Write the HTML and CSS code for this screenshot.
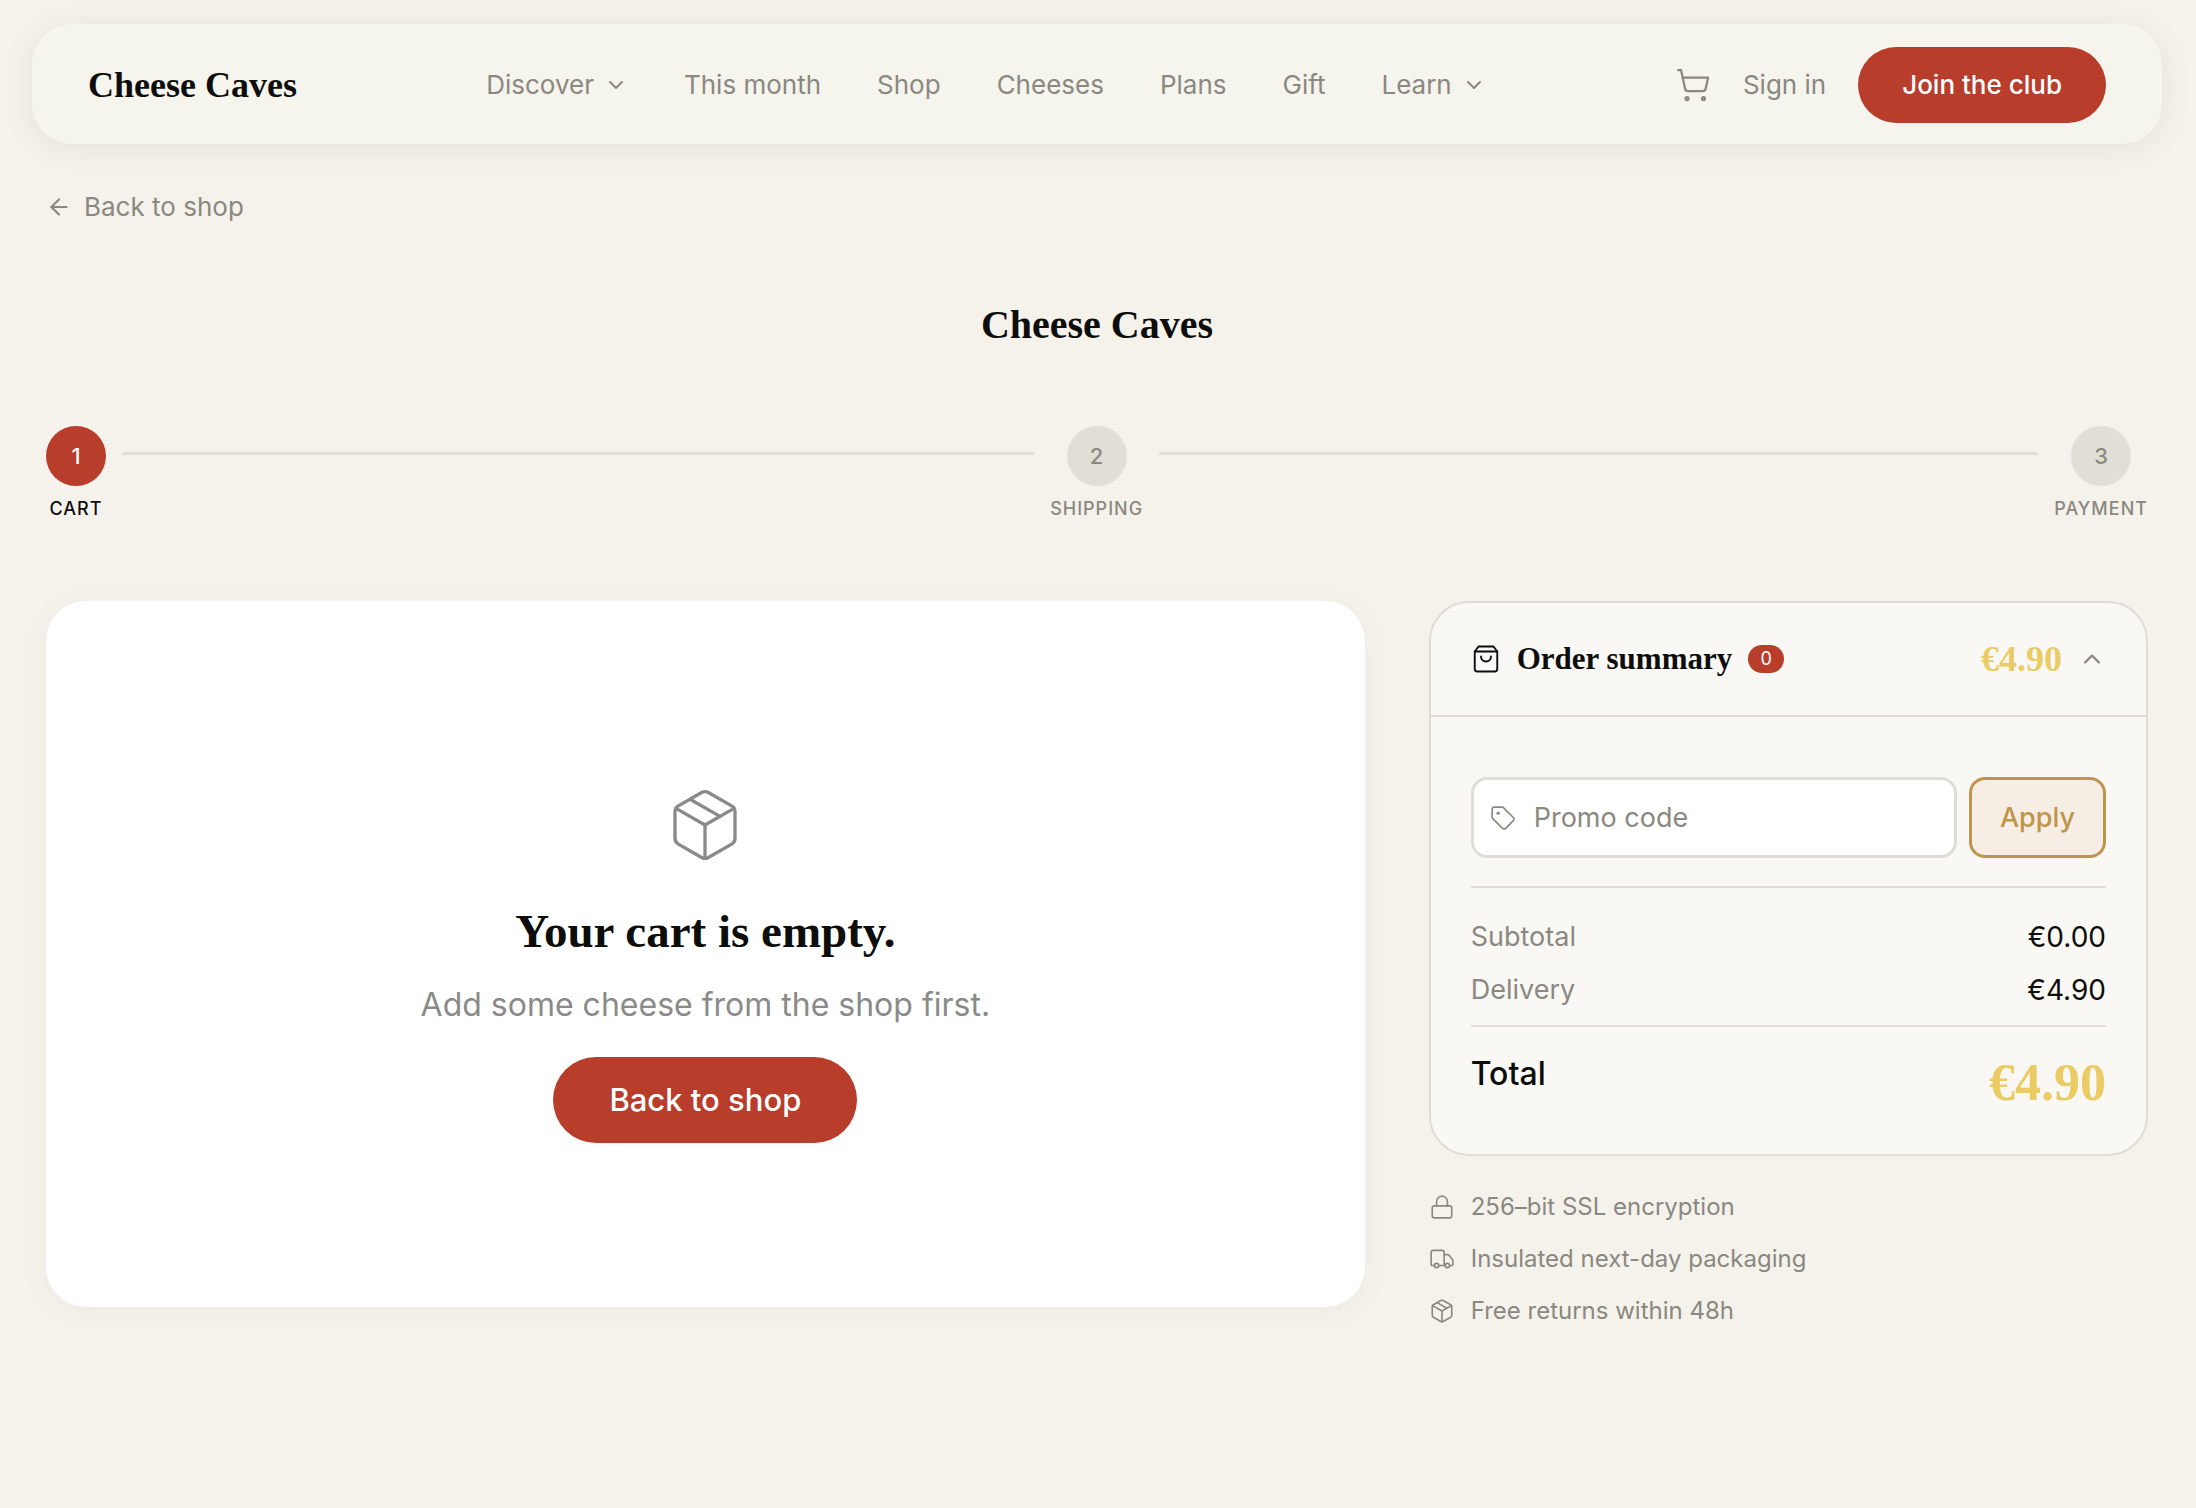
FILE: index.html
```html
<!DOCTYPE html>
<html lang="en">
  <head>
    <meta charset="UTF-8" />
    <meta name="viewport" content="width=device-width, initial-scale=1.0" />
    <title>Checkout - Cheese Caves</title>
    <link rel="stylesheet" href="styles.css">
  </head>
  <body>
    <header class="site-header">
      <a class="logo" href="#">Cheese Caves</a>
      <nav class="main-nav">
        <button class="nav-item" type="button">
          Discover
          <svg class="icon icon-chevron" viewBox="0 0 24 24"><path d="m6 9 6 6 6-6" /></svg>
        </button>
        <a class="nav-item" href="#">This month</a>
        <a class="nav-item" href="#">Shop</a>
        <a class="nav-item" href="#">Cheeses</a>
        <a class="nav-item" href="#">Plans</a>
        <a class="nav-item" href="#">Gift</a>
        <button class="nav-item" type="button">
          Learn
          <svg class="icon icon-chevron" viewBox="0 0 24 24"><path d="m6 9 6 6 6-6" /></svg>
        </button>
      </nav>
      <div class="header-actions">
        <a class="cart-link" href="#" aria-label="Cart">
          <svg class="icon icon-cart" viewBox="0 0 24 24">
            <circle cx="8" cy="21" r="1" />
            <circle cx="19" cy="21" r="1" />
            <path d="M2.05 2.05h2l2.66 12.42a2 2 0 0 0 2 1.58h9.78a2 2 0 0 0 1.95-1.57l1.65-7.43H5.12" />
          </svg>
        </a>
        <a class="nav-item" href="#">Sign in</a>
        <a class="btn btn-small" href="#">Join the club</a>
      </div>
    </header>

    <main class="checkout">
      <a class="back-link" href="#">
        <svg class="icon icon-back" viewBox="0 0 24 24"><path d="m12 19-7-7 7-7" /><path d="M19 12H5" /></svg>
        Back to shop
      </a>

      <h1 class="brand">Cheese Caves</h1>

      <ol class="steps">
        <li class="step-item">
          <div class="step step-active">
            <span class="step-number">1</span>
            <span class="step-label">Cart</span>
          </div>
          <div class="step-line"></div>
        </li>
        <li class="step-item">
          <div class="step">
            <span class="step-number">2</span>
            <span class="step-label">Shipping</span>
          </div>
          <div class="step-line"></div>
        </li>
        <li class="step-item">
          <div class="step">
            <span class="step-number">3</span>
            <span class="step-label">Payment</span>
          </div>
        </li>
      </ol>

      <div class="columns">
        <section class="cart-card">
          <svg class="icon icon-empty" viewBox="0 0 24 24">
            <path d="M11 21.73a2 2 0 0 0 2 0l7-4A2 2 0 0 0 21 16V8a2 2 0 0 0-1-1.73l-7-4a2 2 0 0 0-2 0l-7 4A2 2 0 0 0 3 8v8a2 2 0 0 0 1 1.73z" />
            <path d="M12 22V12" />
            <path d="M3.29 7 12 12l8.71-5" />
            <path d="m7.5 4.27 9 5.15" />
          </svg>
          <h2 class="empty-title">Your cart is empty.</h2>
          <p class="empty-text">Add some cheese from the shop first.</p>
          <a class="btn btn-large" href="#">Back to shop</a>
        </section>

        <aside class="sidebar">
          <section class="summary">
            <button class="summary-toggle" type="button" aria-expanded="true">
              <svg class="icon icon-bag" viewBox="0 0 24 24">
                <path d="M6 2 3 6v14a2 2 0 0 0 2 2h14a2 2 0 0 0 2-2V6l-3-4Z" />
                <path d="M3 6h18" />
                <path d="M16 10a4 4 0 0 1-8 0" />
              </svg>
              <span class="summary-title">Order summary</span>
              <span class="count">0</span>
              <span class="summary-price">€4.90</span>
              <svg class="icon icon-up" viewBox="0 0 24 24"><path d="m18 15-6-6-6 6" /></svg>
            </button>
            <div class="summary-body">
              <form class="promo">
                <label class="promo-field">
                  <svg class="icon icon-tag" viewBox="0 0 24 24">
                    <path d="M12.59 2.59A2 2 0 0 0 11.17 2H4a2 2 0 0 0-2 2v7.17a2 2 0 0 0 .59 1.42l8.7 8.7a2.43 2.43 0 0 0 3.42 0l6.58-6.58a2.43 2.43 0 0 0 0-3.42z" />
                    <circle class="tag-hole" cx="7.5" cy="7.5" r="1.5" />
                  </svg>
                  <input class="promo-input" type="text" placeholder="Promo code" aria-label="Promo code" />
                </label>
                <button class="promo-apply" type="button">Apply</button>
              </form>
              <dl class="totals">
                <div class="row">
                  <dt>Subtotal</dt>
                  <dd>€0.00</dd>
                </div>
                <div class="row">
                  <dt>Delivery</dt>
                  <dd>€4.90</dd>
                </div>
                <div class="row row-total">
                  <dt>Total</dt>
                  <dd>€4.90</dd>
                </div>
              </dl>
            </div>
          </section>

          <ul class="perks">
            <li>
              <svg class="icon icon-perk" viewBox="0 0 24 24">
                <rect x="3" y="11" width="18" height="11" rx="2" />
                <path d="M7 11V7a5 5 0 0 1 10 0v4" />
              </svg>
              256–bit SSL encryption
            </li>
            <li>
              <svg class="icon icon-perk" viewBox="0 0 24 24">
                <path d="M14 18V6a2 2 0 0 0-2-2H4a2 2 0 0 0-2 2v11a1 1 0 0 0 1 1h2" />
                <path d="M15 18H9" />
                <path d="M19 18h2a1 1 0 0 0 1-1v-3.65a1 1 0 0 0-.22-.62l-3.48-4.35A1 1 0 0 0 17.52 8H14" />
                <circle cx="17" cy="18" r="2" />
                <circle cx="7" cy="18" r="2" />
              </svg>
              Insulated next-day packaging
            </li>
            <li>
              <svg class="icon icon-perk" viewBox="0 0 24 24">
                <path d="M11 21.73a2 2 0 0 0 2 0l7-4A2 2 0 0 0 21 16V8a2 2 0 0 0-1-1.73l-7-4a2 2 0 0 0-2 0l-7 4A2 2 0 0 0 3 8v8a2 2 0 0 0 1 1.73z" />
                <path d="M12 22V12" />
                <path d="M3.29 7 12 12l8.71-5" />
                <path d="m7.5 4.27 9 5.15" />
              </svg>
              Free returns within 48h
            </li>
          </ul>
        </aside>
      </div>
    </main>
  </body>
</html>
```
FILE: styles.css
```css
* {
  box-sizing: border-box;
}
body {
  margin: 0;
  padding: 24px 34px 24px 32px;
  background-color: #f5f2eb;
  color: #0d0d0b;
  font-family: Inter, "Open Sans", sans-serif;
  font-size: 27px;
  line-height: 36px;
}
a {
  color: inherit;
  text-decoration: none;
}
button,
input {
  font: inherit;
}
.icon {
  flex: none;
  fill: none;
  stroke: currentColor;
  stroke-width: 1.5;
  stroke-linecap: round;
  stroke-linejoin: round;
}

/* header */
.site-header {
  display: flex;
  justify-content: space-between;
  align-items: center;
  height: 120px;
  padding: 2px 56px 0;
  border-radius: 40px;
  background-color: #f5f4ed;
  box-shadow: 0 4px 32px rgba(13, 13, 30, 0.07);
}
.logo,
.brand,
.empty-title,
.summary-title,
.summary-price,
.row-total dd {
  font-family: "Liberation Serif", serif;
  font-weight: bold;
}
.logo {
  font-size: 36px;
}
.main-nav {
  display: flex;
  gap: 56px;
}
.nav-item {
  display: flex;
  align-items: center;
  gap: 10px;
  padding: 0;
  border: 0;
  background: none;
  color: #8a8880;
  font-size: 26px;
}
.icon-chevron {
  width: 24px;
  height: 24px;
  stroke-width: 2;
}
.header-actions {
  display: flex;
  align-items: center;
  gap: 32px;
}
.cart-link {
  display: flex;
  color: #8a8880;
}
.icon-cart {
  width: 36px;
  height: 36px;
}
.btn {
  border-radius: 48px;
  background-color: #b83d2b;
  color: white;
  font-weight: 500;
}
.btn-small {
  padding: 20px 44px;
  font-size: 26px;
}
.btn-large {
  padding: 24px 56px;
  font-size: 31px;
  line-height: 38px;
}

/* checkout */
.checkout {
  padding: 45px 14px;
}
.back-link {
  display: flex;
  align-items: center;
  gap: 12px;
  width: fit-content;
  color: #8a8880;
  font-size: 26px;
}
.icon-back {
  width: 26px;
  height: 26px;
  stroke-width: 2;
}
.brand {
  margin: 75px 0 76px;
  font-size: 40px;
  line-height: 50px;
  text-align: center;
}

/* steps */
.steps {
  display: flex;
  gap: 16px;
  margin: 0 0 79px;
  padding: 0;
  list-style: none;
}
.step-item {
  display: flex;
  flex: 1;
  align-items: flex-start;
  gap: 16px;
}
.step-item:last-child {
  flex: none;
}
.step {
  display: flex;
  flex-direction: column;
  align-items: center;
  gap: 10px;
  color: #8a8880;
}
.step-number {
  display: flex;
  justify-content: center;
  align-items: center;
  width: 60px;
  height: 60px;
  border-radius: 50%;
  background-color: #e1ded6;
  font-size: 22px;
  font-weight: 500;
}
.step-label {
  font-size: 18px;
  line-height: 26px;
  font-weight: 500;
  letter-spacing: 1px;
  text-transform: uppercase;
}
.step-active {
  color: #0d0d0b;
}
.step-active .step-number {
  background-color: #b83d2b;
  color: white;
}
.step-line {
  flex: 1;
  height: 3px;
  margin-top: 26px;
  background-color: #e1ded6;
}

/* columns */
.columns {
  display: grid;
  grid-template-columns: minmax(0, 11fr) minmax(0, 6fr);
  gap: 64px;
  align-items: start;
}
.cart-card {
  display: flex;
  flex-direction: column;
  align-items: center;
  padding: 184px 40px 164px;
  border-radius: 40px;
  background-color: white;
  box-shadow: 0 4px 32px rgba(13, 13, 30, 0.04);
}
.icon-empty {
  width: 80px;
  height: 80px;
  color: #8a8a88;
  stroke-width: 1;
}
.empty-title {
  margin: 38px 0 22px;
  font-size: 47px;
  line-height: 56px;
}
.empty-text {
  margin: 0 0 28px;
  color: #8a8a88;
  font-size: 32px;
  line-height: 48px;
}

/* order summary */
.summary {
  border: 2px solid #dfddd6;
  border-radius: 40px;
  background-color: #faf8f4;
}
.summary-toggle {
  display: flex;
  align-items: center;
  gap: 16px;
  width: 100%;
  height: 114px;
  padding: 0 40px;
  border: 0;
  border-bottom: 2px solid #dfddd6;
  background: none;
  color: inherit;
}
.icon-bag {
  width: 30px;
  height: 30px;
}
.summary-title {
  font-size: 31px;
}
.count {
  min-width: 36px;
  border-radius: 14px;
  background-color: #b83d2b;
  color: white;
  font-size: 18px;
  line-height: 28px;
}
.summary-price {
  margin-left: auto;
  color: #ebcb63;
  font-size: 36px;
}
.icon-up {
  width: 28px;
  height: 28px;
  color: #8a8880;
  stroke-width: 2;
}
.summary-body {
  padding: 60px 40px 38px;
}
.promo {
  display: flex;
  gap: 12px;
  padding-bottom: 28px;
  border-bottom: 2px solid #dfddd6;
}
.promo-field {
  display: flex;
  flex: 1;
  align-items: center;
  gap: 18px;
  min-width: 0;
  height: 81px;
  padding: 0 16px;
  border: 3px solid #dfddd6;
  border-radius: 16px;
  background-color: white;
}
.icon-tag {
  width: 26px;
  height: 26px;
  color: #8a8880;
}
.tag-hole {
  fill: currentColor;
  stroke: none;
}
.promo-input {
  flex: 1;
  min-width: 0;
  padding: 0;
  border: 0;
  outline: 0;
  background: none;
}
.promo-input::placeholder {
  color: #8a8880;
}
.promo-apply {
  padding: 0 28px;
  border: 3px solid #bf944b;
  border-radius: 16px;
  background-color: #f6ede5;
  color: #bf944b;
  font-weight: 500;
}
.totals {
  margin: 0;
  padding-top: 31px;
}
.row {
  display: flex;
  justify-content: space-between;
  margin-bottom: 17px;
}
.row dt {
  color: #8a8880;
}
.row dd {
  margin: 0;
  font-size: 28px;
}
.row-total {
  margin: 0;
  padding-top: 23px;
  border-top: 2px solid #dfddd6;
}
.row-total dt {
  color: inherit;
  font-size: 32px;
  line-height: 48px;
  font-weight: 500;
}
.row-total dd {
  color: #ebcb63;
  font-size: 52px;
  line-height: 66px;
}

/* perks */
.perks {
  display: flex;
  flex-direction: column;
  gap: 16px;
  margin: 33px 0 0;
  padding: 0;
  color: #8a8880;
  font-size: 24px;
  list-style: none;
}
.perks li {
  display: flex;
  align-items: center;
  gap: 16px;
}
.icon-perk {
  width: 26px;
  height: 26px;
}
```
